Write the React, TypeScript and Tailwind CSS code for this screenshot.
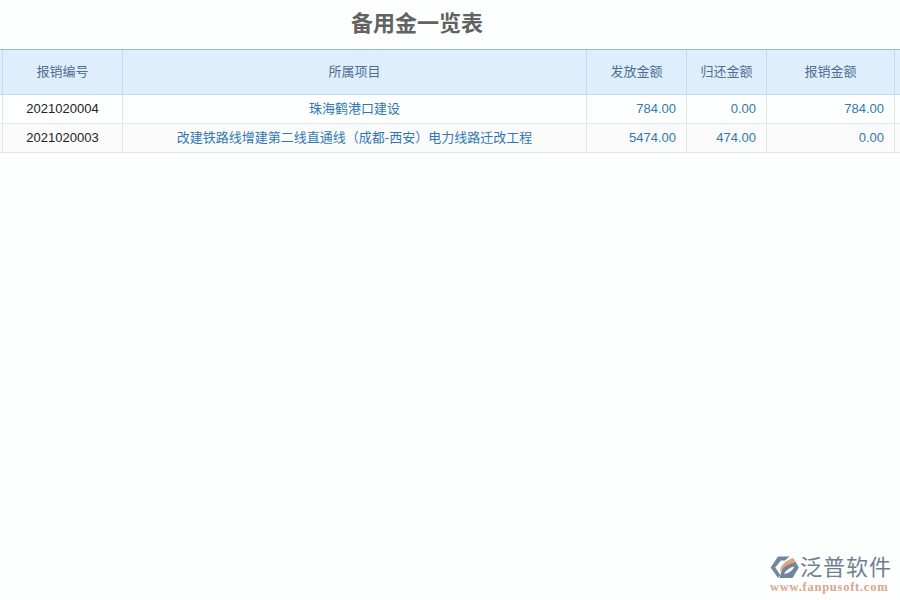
const font = { fontFamily: '"Liberation Sans", "Noto Sans CJK SC", sans-serif' };

const cols = "grid grid-cols-[3px_120px_464px_100px_80px_128px_5px]";
const head = "flex items-center justify-center text-[13px] text-[#4f6f8f] border-r border-[#c5d9ea]";
const cell = "flex items-center text-[13px] border-r border-[#e3e6e9]";

function Row({ id, name, a, b, c, bg }: { id: string; name: string; a: string; b: string; c: string; bg: string }) {
  const num = `${cell} justify-end pr-[10px] text-[#2f78b4]`;
  return (
    <div className={`${cols} h-[29px] border-b border-[#e3e6e9] ${bg}`}>
      <div className={cell} />
      <div className={`${cell} justify-center text-[#222222]`}>{id}</div>
      <div className={`${cell} justify-center text-[#2f78b4]`}>{name}</div>
      <div className={num}>{a}</div>
      <div className={num}>{b}</div>
      <div className={num}>{c}</div>
      <div />
    </div>
  );
}

export default function App() {
  return (
    <div style={font} className="relative w-[900px] h-[600px] overflow-hidden bg-[#fdfefe]">
      <h1 className="h-[49px] pt-[9px] pl-[351px] text-[22px] leading-[30px] font-bold text-[#626262]">备用金一览表</h1>
      <div className={`${cols} h-[46px] bg-[#deeefc] border-t border-[#92bcd8] border-b border-b-[#c5d9ea]`}>
        <div className={head} />
        <div className={head}>报销编号</div>
        <div className={head}>所属项目</div>
        <div className={head}>发放金额</div>
        <div className={head}>归还金额</div>
        <div className={head}>报销金额</div>
        <div />
      </div>
      <Row id="2021020004" name="珠海鹤港口建设" a="784.00" b="0.00" c="784.00" bg="bg-[#feffff]" />
      <Row id="2021020003" name="改建铁路线增建第二线直通线（成都-西安）电力线路迁改工程" a="5474.00" b="474.00" c="0.00" bg="bg-[#fbfbfb]" />

      <div className="absolute left-[770px] top-[555px] w-[126px]">
        <div className="flex items-center h-[25px]">
          <svg width="30" height="25" viewBox="0 0 26 25" preserveAspectRatio="none" className="shrink-0">
            <path d="M7 1.5H17L13 5.5H9.5L4.5 12.5L9 20L7 23L0.5 12.5Z" fill="#71869c" />
            <path d="M9 20.5C10 12 14 8 22 6.5L25 12.5L19.5 23H8Z" fill="#71869c" />
            <path d="M8.5 17C9 11 13 5.5 20 3C21.5 5 22 6 22 7.5C16 8.5 11.5 12 8.5 17Z" fill="#e6a27c" />
            <path d="M12 19C14 15 17 12.5 21 11.5C20 15 17 18 12 19Z" fill="#fdfefe" />
          </svg>
          <span className="text-[22px] leading-[25px] tracking-[1px] text-[#6d7f90] whitespace-nowrap">泛普软件</span>
        </div>
        <div style={{ fontFamily: '"Liberation Serif", serif' }} className="mt-[1px] text-[12.5px] leading-[13px] font-bold tracking-[0.75px] text-[#d9a68c] whitespace-nowrap">www.fanpusoft.com</div>
      </div>
    </div>
  );
}
